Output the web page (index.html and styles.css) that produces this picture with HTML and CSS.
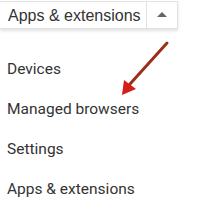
FILE: index.html
```html
<!DOCTYPE html>
<html>
<head>
<meta charset="utf-8">
<link rel="stylesheet" href="styles.css">
</head>
<body>
<div class="page">
  <div class="select">
    <div class="select-label">Apps &amp; extensions</div>
    <div class="select-btn"><span class="caret"></span></div>
  </div>
  <ul class="menu">
    <li class="item">Devices</li>
    <li class="item">Managed browsers</li>
    <li class="item">Settings</li>
    <li class="item">Apps &amp; extensions</li>
  </ul>
  <svg class="arrow" width="200" height="217" viewBox="0 0 200 217">
    <line x1="167" y1="43" x2="130" y2="84" stroke="#9c2f1a" stroke-width="3" stroke-linecap="round"/>
    <polygon points="122,95 124,80 136,89" fill="#d41e1a"/>
  </svg>
</div>
</body>
</html>
```
FILE: styles.css
```css
html, body { margin: 0; padding: 0; background: #fff; }
.page { position: relative; width: 200px; height: 217px; overflow: hidden; }
.select {
  display: flex;
  width: 178px;
  height: 28px;
  margin-top: 1px;
  border: 1px solid #e2e2e2;
  border-left: none;
  box-sizing: border-box;
  box-shadow: 0 2px 3px rgba(0,0,0,0.12);
  background: #fff;
}
.select-label {
  flex: 1;
  padding-left: 8px;
  font-family: "Liberation Sans", Arial, sans-serif;
  font-size: 16px;
  line-height: 27px;
  color: #333;
}
.select-btn {
  width: 30px;
  border-left: 1px solid #e2e2e2;
  display: flex;
  align-items: center;
  justify-content: center;
}
.caret {
  width: 0; height: 0;
  border-left: 5px solid transparent;
  border-right: 5px solid transparent;
  border-bottom: 5px solid #666;
  margin-bottom: 2px;
}
.menu {
  list-style: none;
  margin: 0;
  padding: 20px 0 0 7px;
}
.item {
  font-family: Roboto, "Noto Sans", sans-serif;
  font-size: 15.5px;
  line-height: 40px;
  height: 40px;
  color: #333;
}
.arrow { position: absolute; left: 0; top: 0; pointer-events: none; }
```
